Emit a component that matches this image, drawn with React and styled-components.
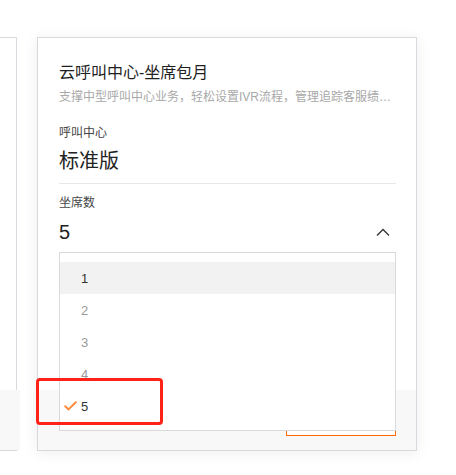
import React from 'react';
import styled, { createGlobalStyle } from 'styled-components';

const GlobalStyle = createGlobalStyle`
  html, body {
    margin: 0;
    padding: 0;
    background: #fff;
    font-family: "Liberation Sans", "Noto Sans CJK SC", sans-serif;
    color: #333;
  }
`

const Page = styled.div`
  display: flex;
  gap: 20px;
  padding-top: 37px;
  width: 456px;
  height: 475px;
  box-sizing: border-box;
  overflow: hidden;
`

const Card = styled.div`
  position: relative;
  display: flex;
  flex-direction: column;
  width: ${p => p.$width}px;
  height: 414px;
  box-sizing: border-box;
  border: 1px solid #d8d8de;
  border-left: ${p => (p.$cut ? 'none' : '1px solid #d8d8de')};
  background: #fff;
  box-shadow: ${p => (p.$cut ? 'none' : '0 2px 14px rgba(0, 0, 0, 0.07)')};
`

const Body = styled.div`
  flex: 1;
  padding: 24px 20px 0 21px;
  display: flex;
  flex-direction: column;
`

const Title = styled.div`
  font-size: 16px;
  line-height: 22px;
  color: #1f1f1f;
`

const Desc = styled.div`
  margin-top: 4px;
  font-size: 12px;
  line-height: 18px;
  color: #a8a8a8;
  white-space: nowrap;
  overflow: hidden;
  text-overflow: ellipsis;
`

const Label = styled.div`
  margin-top: ${p => p.$top}px;
  font-size: 12px;
  line-height: 18px;
  color: #444;
`

const Value = styled.div`
  margin-top: ${p => p.$top}px;
  font-size: 20px;
  line-height: 28px;
  color: #222;
`

const Divider = styled.div`
  margin-top: 8px;
  height: 1px;
  background: #e8e8e8;
`

const SelectWrap = styled.div`
  position: relative;
  margin-top: 6px;
`

const SelectRow = styled.div`
  display: flex;
  align-items: center;
  justify-content: space-between;
  font-size: 20px;
  line-height: 28px;
  color: #222;
`

const Chevron = styled.svg`
  width: 14px;
  height: 8px;
  margin-right: 6px;
`

const Dropdown = styled.ul`
  position: absolute;
  top: calc(100% + 6px);
  left: 0;
  right: 0;
  z-index: 5;
  margin: 0;
  padding: 9px 0 8px;
  list-style: none;
  background: #fff;
  border: 1px solid #d9d9d9;
`

const Option = styled.li`
  position: relative;
  display: flex;
  align-items: center;
  height: 32px;
  padding-left: 4px;
  font-size: 13px;
  color: ${p => (p.$muted ? '#9a9a9a' : '#333')};
  background: ${p => (p.$hover ? '#f2f2f2' : '#fff')};
`

const CheckSlot = styled.span`
  width: 17px;
  display: flex;
  align-items: center;
`

const Mark = styled.div`
  position: absolute;
  top: -12px;
  left: -24px;
  width: 127px;
  height: 47px;
  box-sizing: border-box;
  border: 3px solid #ff2216;
  border-radius: 4px;
`

const Footer = styled.div`
  height: 60px;
  background: #f8f8f8;
  display: flex;
  align-items: center;
  justify-content: flex-end;
  padding-right: 20px;
`

const BuyButton = styled.button`
  width: 110px;
  height: 32px;
  border: 1px solid #ff6a00;
  background: #fff;
  color: #ff6a00;
  font-family: inherit;
  font-size: 12px;
`

const options = [1, 2, 3, 4, 5];

export default function App() {
  const selected = 5;

  return (
    <>
      <GlobalStyle />
      <Page>
        <Card $width={17} $cut>
          <Body />
          <Footer />
        </Card>
        <Card $width={380}>
          <Body>
            <Title>云呼叫中心-坐席包月</Title>
            <Desc>支撑中型呼叫中心业务，轻松设置IVR流程，管理追踪客服绩效，提升服务质量</Desc>
            <Label $top={18}>呼叫中心</Label>
            <Value $top={5}>标准版</Value>
            <Divider />
            <Label $top={10}>坐席数</Label>
            <SelectWrap>
              <SelectRow>
                <span>{selected}</span>
                <Chevron viewBox="0 0 14 8">
                  <path d="M1 7.5 L7 1.5 L13 7.5" fill="none" stroke="#333" strokeWidth="1.3" />
                </Chevron>
              </SelectRow>
              <Dropdown>
                {options.map(n => (
                  <Option key={n} $hover={n === 1} $muted={n > 1 && n < 5}>
                    <CheckSlot>
                      {n === selected && (
                        <svg width="13" height="10" viewBox="0 0 13 10">
                          <path d="M1.2 5.2 L4.6 8.4 L11.8 1.2" fill="none" stroke="#ff8a3c" strokeWidth="2" strokeLinecap="round" strokeLinejoin="round" />
                        </svg>
                      )}
                    </CheckSlot>
                    {n}
                    {n === selected && <Mark />}
                  </Option>
                ))}
              </Dropdown>
            </SelectWrap>
          </Body>
          <Footer>
            <BuyButton>立即购买</BuyButton>
          </Footer>
        </Card>
      </Page>
    </>
  );
}
